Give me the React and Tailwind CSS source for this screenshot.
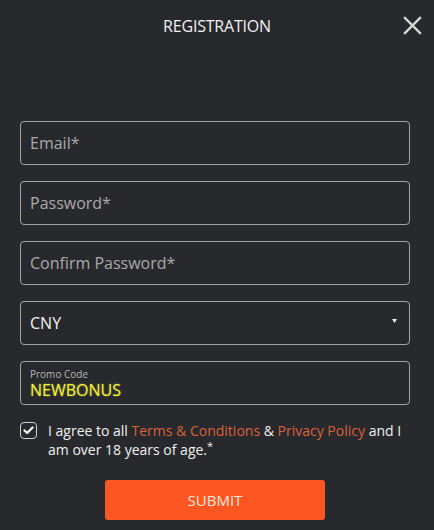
export default function App() {
  const font = { fontFamily: '"Open Sans", "Noto Sans", sans-serif' };
  return (
    <div className="w-[434px] h-[530px] bg-[#28292d] text-white overflow-hidden" style={font}>
      <div className="relative h-[52px] flex items-center justify-center">
        <span className="text-[16px] text-[#f0f0f0] tracking-[-0.2px]">REGISTRATION</span>
        <button className="absolute right-[12px] top-[15px] w-[20px] h-[20px] flex items-center justify-center">
          <svg width="19" height="19" viewBox="0 0 19 19" fill="none" stroke="#d8d8d8" strokeWidth="2.4" strokeLinecap="square">
            <path d="M2 2 L17 17 M17 2 L2 17" />
          </svg>
        </button>
      </div>
      <div className="pl-[20px] pr-[24px] pt-[69px] flex flex-col gap-[16px]">
        <div className="h-[44px] border border-[#a3a3a3] rounded-[4px] flex items-center px-[9px]">
          <span className="text-[16px] text-[#a9a9a9]">Email*</span>
        </div>
        <div className="h-[44px] border border-[#a3a3a3] rounded-[4px] flex items-center px-[9px]">
          <span className="text-[16px] text-[#a9a9a9]">Password*</span>
        </div>
        <div className="h-[44px] border border-[#a3a3a3] rounded-[4px] flex items-center px-[9px]">
          <span className="text-[16px] text-[#a9a9a9]">Confirm Password*</span>
        </div>
        <div className="h-[44px] border border-[#a3a3a3] rounded-[4px] flex items-center justify-between pl-[9px] pr-[12px]">
          <span className="text-[16px] text-[#f2f2f2]">CNY</span>
          <svg width="5" height="4" viewBox="0 0 5 4" className="mb-[4px]">
            <path d="M0 0 L5 0 L2.5 4 Z" fill="#eeeeee" />
          </svg>
        </div>
        <div className="h-[44px] border border-[#a3a3a3] rounded-[4px] flex flex-col justify-center px-[9px]">
          <span className="text-[10px] leading-[12px] text-[#b5b5b5] mt-[2px]">Promo Code</span>
          <span className="text-[16px] leading-[20px] text-[#f2f23a]" style={{ textShadow: '0 0 2px rgba(240,240,60,0.5)' }}>NEWBONUS</span>
        </div>
      </div>
      <div className="flex items-start pl-[20px] pr-[24px] mt-[16px]">
        <div className="w-[17px] h-[17px] mt-[1px] rounded-[4px] border-[1.5px] border-[#d0d0d0] flex items-center justify-center shrink-0">
          <svg width="11" height="9" viewBox="0 0 11 9" fill="none" stroke="#ffffff" strokeWidth="2.2" strokeLinecap="round" strokeLinejoin="round">
            <path d="M1.5 4.5 L4.2 7 L9.5 1.5" />
          </svg>
        </div>
        <p className="ml-[11px] text-[14px] leading-[19px] text-[#f0f0f0]">
          I agree to all <span className="text-[#d9623a]">Terms &amp; Conditions</span> &amp;{' '}
          <span className="text-[#d9623a]">Privacy Policy</span> and I am over 18 years of age.<sup className="text-[11px]">*</sup>
        </p>
      </div>
      <div className="flex justify-center mt-[21px] pr-[4px]">
        <button className="w-[220px] h-[40px] rounded-[3px] bg-[#fe5622] text-[15px] text-[#f7e6dc]">SUBMIT</button>
      </div>
    </div>
  );
}
